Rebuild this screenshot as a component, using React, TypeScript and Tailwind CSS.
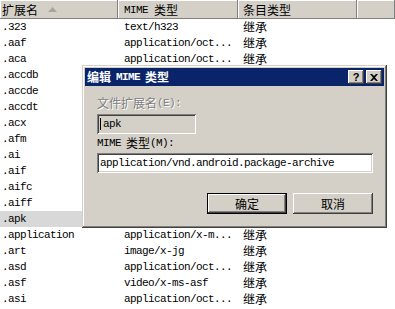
import React from "react";

const cjk = "font-['Noto_Sans_CJK_SC',sans-serif] text-[12px] leading-[14px]";
const mono = "font-['Liberation_Mono','Noto_Sans_CJK_SC',monospace] text-[11px] leading-[14px] tracking-[-0.6px]";

function M({ children, className = "" }: { children: React.ReactNode; className?: string }) {
  return <span className={`${mono} ${className}`}>{children}</span>;
}

function C({ children, className = "" }: { children: React.ReactNode; className?: string }) {
  return <span className={`${cjk} ${className}`}>{children}</span>;
}

// rows covered by the dialog only show their first column
const rows: [string, string | null][] = [
  [".323", "text/h323"],
  [".aaf", "application/oct..."],
  [".aca", "application/oct..."],
  [".accdb", null],
  [".accde", null],
  [".accdt", null],
  [".acx", null],
  [".afm", null],
  [".ai", null],
  [".aif", null],
  [".aifc", null],
  [".aiff", null],
  [".apk", null],
  [".application", "application/x-m..."],
  [".art", "image/x-jg"],
  [".asd", "application/oct..."],
  [".asf", "video/x-ms-asf"],
  [".asi", "application/oct..."],
];

const bevel =
  "shadow-[inset_-1px_-1px_0_#404040,inset_1px_1px_0_#ffffff,inset_-2px_-2px_0_#808080,inset_2px_2px_0_#d4d0c8]";
const sunken =
  "shadow-[inset_1px_1px_0_#808080,inset_-1px_-1px_0_#ffffff,inset_2px_2px_0_#404040,inset_-2px_-2px_0_#d4d0c8]";

function HeaderCell({ children, className = "" }: { children?: React.ReactNode; className?: string }) {
  return (
    <div
      className={`h-[19px] flex items-center bg-[#d4d0c8] shadow-[inset_-1px_-1px_0_#808080,inset_1px_1px_0_#ffffff] ${className}`}
    >
      {children}
    </div>
  );
}

function Dialog() {
  return (
    <div className="absolute left-[82px] top-[65px] w-[305px] h-[163px] bg-[#d4d0c8] p-[3px] flex flex-col shadow-[inset_-1px_-1px_0_#404040,inset_1px_1px_0_#d4d0c8,inset_-2px_-2px_0_#808080,inset_2px_2px_0_#ffffff]">
      {/* title bar */}
      <div className="h-[18px] bg-[#0a246a] flex items-center justify-between pl-[2px] pr-[2px]">
        <div className="flex items-center gap-[5px] text-white">
          <C className="font-bold">编辑</C>
          <M className="font-bold">MIME</M>
          <C className="font-bold">类型</C>
        </div>
        <div className="flex items-center gap-[2px]">
          <div className={`w-[16px] h-[14px] bg-[#d4d0c8] flex items-center justify-center ${bevel}`}>
            <span className="font-['Liberation_Sans',sans-serif] text-[11px] font-bold leading-none text-black">?</span>
          </div>
          <div className={`w-[16px] h-[14px] bg-[#d4d0c8] flex items-center justify-center ${bevel}`}>
            <svg width="8" height="7" viewBox="0 0 8 7">
              <path d="M0 0h2l2 2 2-2h2L5 3.5 8 7H6L4 5 2 7H0l3-3.5z" fill="#000" />
            </svg>
          </div>
        </div>
      </div>

      {/* body */}
      <div className="flex-1 flex flex-col pl-[12px] pr-[11px] pt-[10px]">
        <div className="h-[14px] flex items-center text-[#808080] [text-shadow:1px_1px_0_#ffffff]">
          <C>文件扩展名</C>
          <M>(E):</M>
        </div>
        <div className={`mt-[4px] w-[99px] h-[20px] bg-[#d4d0c8] flex items-center pl-[2px] ${sunken}`}>
          <span className="w-px h-[12px] bg-black ml-[1px] mr-[2px]" />
          <M>apk</M>
        </div>
        <div className="mt-[2px] h-[14px] flex items-center gap-[5px] text-black">
          <M>MIME</M>
          <span className="flex items-center">
            <C>类型</C>
            <M>(M):</M>
          </span>
        </div>
        <div className={`mt-[3px] w-[276px] h-[20px] bg-white flex items-center pl-[3px] ${sunken}`}>
          <M>application/vnd.android.package-archive</M>
        </div>
        <div className="mt-[20px] flex justify-end gap-[6px]">
          <div className="w-[80px] h-[21px] border border-black">
            <div className={`w-full h-full bg-[#d4d0c8] flex items-center justify-center ${bevel}`}>
              <C>确定</C>
            </div>
          </div>
          <div className={`w-[80px] h-[21px] bg-[#d4d0c8] flex items-center justify-center ${bevel}`}>
            <C>取消</C>
          </div>
        </div>
      </div>
    </div>
  );
}

export default function App() {
  return (
    <div className="relative w-[395px] h-[309px] bg-white overflow-hidden text-black">
      {/* header */}
      <div className="grid grid-cols-[118px_120px_119px_1fr]">
        <HeaderCell className="pl-[2px]">
          <C>扩展名</C>
          <svg className="ml-[10px]" width="9" height="5" viewBox="0 0 9 5">
            <path d="M4.5 0L9 5H0z" fill="#a8a49c" />
          </svg>
        </HeaderCell>
        <HeaderCell className="pl-[6px] gap-[6px]">
          <M>MIME</M>
          <C>类型</C>
        </HeaderCell>
        <HeaderCell className="pl-[5px]">
          <C>条目类型</C>
        </HeaderCell>
        <HeaderCell />
      </div>

      {/* rows */}
      <div className="flex flex-col">
        {rows.map(([ext, mime]) => (
          <div key={ext} className="grid grid-cols-[118px_120px_119px_1fr] h-[16px] items-center">
            <div className={`h-full flex items-center pl-[2px] ${ext === ".apk" ? "bg-[#d8d8d8]" : ""}`}>
              <M>{ext}</M>
            </div>
            <div className="pl-[6px] flex items-center">{mime && <M>{mime}</M>}</div>
            <div className="pl-[5px] flex items-center">{mime && <C>继承</C>}</div>
            <div />
          </div>
        ))}
      </div>

      <Dialog />
    </div>
  );
}
